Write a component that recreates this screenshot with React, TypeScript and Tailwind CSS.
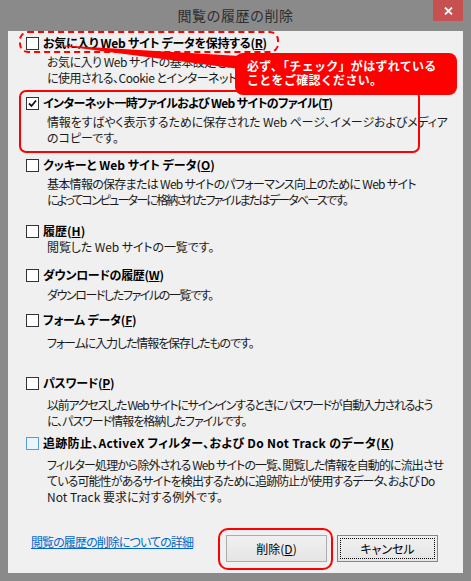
import React from "react";

const FONT = "font-['Noto_Sans_CJK_JP','Noto_Sans',sans-serif]";
const PALT = "[font-feature-settings:'palt']";

type Line = [string, string];

type ItemProps = {
  label: React.ReactNode;
  labelTrack: string;
  desc: Line[];
  mt: string;
  gap: string;
  checked?: boolean;
  focus?: boolean;
};

function Checkbox({ checked, focus }: { checked?: boolean; focus?: boolean }) {
  return (
    <div
      className={
        "w-[13px] h-[13px] shrink-0 border flex items-center justify-center " +
        (focus ? "border-[#5a9bd5] bg-[#eaf4fd]" : "border-[#333333] bg-white")
      }
    >
      {checked && (
        <svg width="9" height="9" viewBox="0 0 9 9">
          <path d="M1 4.5 L3.5 7 L8 1.5" fill="none" stroke="#111" strokeWidth="1.8" />
        </svg>
      )}
    </div>
  );
}

function Item({ label, labelTrack, desc, mt, gap, checked, focus }: ItemProps) {
  return (
    <div className={"flex flex-col " + mt}>
      <div className="flex items-center h-[16px]">
        <Checkbox checked={checked} focus={focus} />
        <span className={"ml-[4px] text-[12px] leading-[16px] font-bold text-black whitespace-nowrap " + labelTrack}>
          {label}
        </span>
      </div>
      <div className={"ml-[21px] flex flex-col " + gap}>
        {desc.map(([d, t], i) => (
          <span key={i} className={"text-[12px] leading-[16px] text-[#1a1a1a] whitespace-nowrap " + t}>
            {d}
          </span>
        ))}
      </div>
    </div>
  );
}

export default function App() {
  return (
    <div className={"relative w-[471px] h-[581px] bg-[#8a8a8a] flex flex-col overflow-hidden " + FONT}>
      {/* Title bar */}
      <div className="relative h-[31px] shrink-0 flex items-center justify-center">
        <span className="text-[14px] text-[#2e2e2e] tracking-[0.5px]">閲覧の履歴の削除</span>
        <div className="absolute right-[8px] top-0 w-[30px] h-[21px] bg-[#c75050] flex items-center justify-center">
          <svg width="9" height="8" viewBox="0 0 9 8">
            <path d="M1 0.5 L8 7.5 M8 0.5 L1 7.5" stroke="#fff" strokeWidth="1.8" />
          </svg>
        </div>
      </div>

      {/* Panel */}
      <div className={"mx-[8px] flex-1 mb-[8px] bg-[#f0f0f0] flex flex-col pl-[18px] overflow-hidden " + PALT}>
        <Item
          mt="mt-[4px]"
          gap="mt-[3px]"
          labelTrack="tracking-[-0.3px]"
          label={<>お気に入り Web サイト データを保持する(<span className="underline">R</span>)</>}
          desc={[
            ["お気に入り Web サイトの基本設定を保存し、表示を高速化するため", "tracking-[-0.5px]"],
            ["に使用される、Cookie とインターネット一時ファイルを保持します。", "tracking-[-0.5px]"],
          ]}
        />
        <Item
          mt="mt-[9px]"
          gap="mt-[3px]"
          checked
          labelTrack="tracking-[-0.7px]"
          label={<>インターネット一時ファイルおよび Web サイトのファイル(<span className="underline">T</span>)</>}
          desc={[
            ["情報をすばやく表示するために保存された Web ページ、イメージおよびメディア", "tracking-[-0.15px]"],
            ["のコピーです。", "tracking-[0px]"],
          ]}
        />
        <Item
          mt="mt-[11px]"
          gap="mt-[3px]"
          labelTrack="tracking-[0px]"
          label={<>クッキーと Web サイト データ(<span className="underline">O</span>)</>}
          desc={[
            ["基本情報の保存または Web サイトのパフォーマンス向上のために Web サイト", "tracking-[-0.7px]"],
            ["によってコンピューターに格納されたファイルまたはデータベースです。", "tracking-[-1.8px]"],
          ]}
        />
        <Item
          mt="mt-[15px]"
          gap="mt-0"
          labelTrack="tracking-[0px]"
          label={<>履歴(<span className="underline">H</span>)</>}
          desc={[["閲覧した Web サイトの一覧です。", "tracking-[-0.1px]"]]}
        />
        <Item
          mt="mt-[12px]"
          gap="mt-[4px]"
          labelTrack="tracking-[-0.3px]"
          label={<>ダウンロードの履歴(<span className="underline">W</span>)</>}
          desc={[["ダウンロードしたファイルの一覧です。", "tracking-[-1.4px]"]]}
        />
        <Item
          mt="mt-[9px]"
          gap="mt-[7px]"
          labelTrack="tracking-[-0.2px]"
          label={<>フォーム データ(<span className="underline">F</span>)</>}
          desc={[["フォームに入力した情報を保存したものです。", "tracking-[-1.1px]"]]}
        />
        <Item
          mt="mt-[24px]"
          gap="mt-[6px]"
          labelTrack="tracking-[-0.3px]"
          label={<>パスワード(<span className="underline">P</span>)</>}
          desc={[
            ["以前アクセスした Web サイトにサインインするときにパスワードが自動入力されるよう", "tracking-[-1.25px]"],
            ["に、パスワード情報を格納したファイルです。", "tracking-[-1px]"],
          ]}
        />
        <Item
          mt="mt-[6px]"
          gap="mt-[6px]"
          focus
          labelTrack="tracking-[0.3px]"
          label={<>追跡防止、ActiveX フィルター、および Do Not Track のデータ(<span className="underline">K</span>)</>}
          desc={[
            ["フィルター処理から除外される Web サイトの一覧、閲覧した情報を自動的に流出させ", "tracking-[-0.9px]"],
            ["ている可能性があるサイトを検出するために追跡防止が使用するデータ、および Do", "tracking-[-0.9px]"],
            ["Not Track 要求に対する例外です。", "tracking-[0px]"],
          ]}
        />

        <div className="flex-1" />
        <div className="flex items-end pl-[5px] pr-[25px] pb-[11px]">
          <span className="mb-[12px] text-[12px] leading-[16px] text-[#0066cc] underline whitespace-nowrap tracking-[-0.9px]">
            閲覧の履歴の削除についての詳細
          </span>
          <div className="ml-auto w-[101px] h-[27px] border border-[#acacac] bg-gradient-to-b from-[#f0f0f0] to-[#e5e5e5] flex items-center justify-center text-[12px] text-black">
            削除(<span className="underline">D</span>)
          </div>
          <div className="ml-[10px] w-[101px] h-[27px] border border-[#3399ff] bg-gradient-to-b from-[#f0f0f0] to-[#e5e5e5] p-[2px]">
            <div className="w-full h-full border border-dotted border-black flex items-center justify-center text-[12px] text-black">
              キャンセル
            </div>
          </div>
        </div>
      </div>

      {/* Annotations */}
      <div className="absolute left-[19px] top-[31px] w-[260px] h-[22px] border-2 border-dashed border-[#ff0000] rounded-[9px]" />
      <div className="absolute left-[19px] top-[90px] w-[401px] h-[63px] border-2 border-[#ff0000] rounded-[7px]" />
      <div className="absolute left-[218px] top-[528px] w-[115px] h-[42px] border-2 border-[#ff0000] rounded-[10px]" />
      <svg className="absolute left-0 top-0" width="471" height="581" viewBox="0 0 471 581">
        <polygon points="55,45 240,56 240,69" fill="#ff0000" />
      </svg>
      <div className="absolute left-[235px] top-[53px] w-[222px] h-[42px] bg-[#ff0000] rounded-[8px] pl-[12px] pt-[6px] flex flex-col">
        <span className="text-[12px] leading-[14px] font-bold text-white whitespace-nowrap tracking-[0.3px]">必ず、「チェック」がはずれている</span>
        <span className="text-[12px] leading-[14px] font-bold text-white whitespace-nowrap tracking-[0.3px]">ことをご確認ください。</span>
      </div>
    </div>
  );
}
